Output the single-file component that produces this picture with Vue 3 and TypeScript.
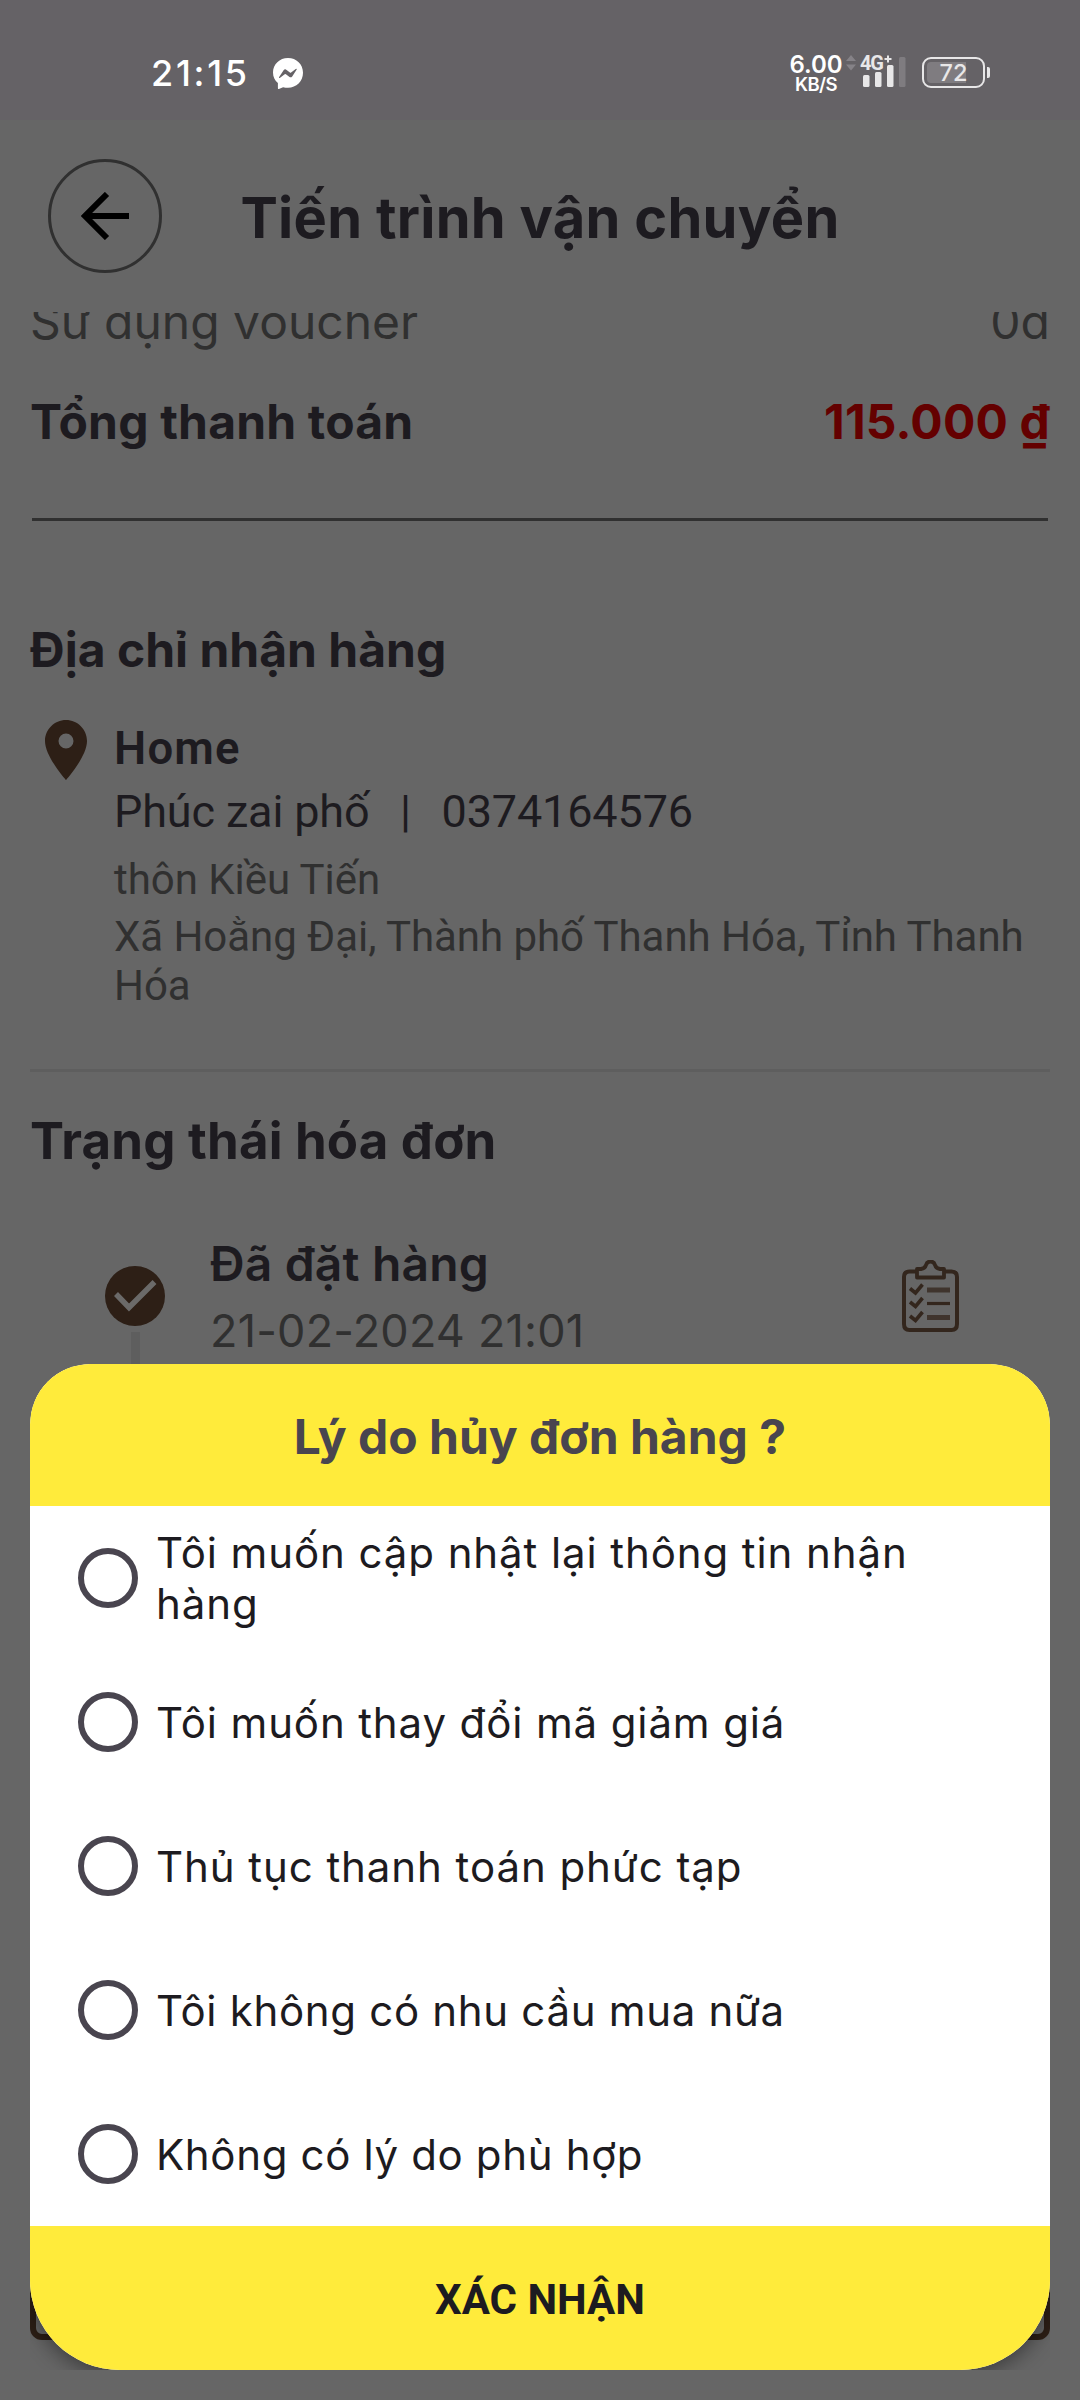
<script setup lang="ts">
import { ref } from 'vue'

interface Reason {
  text: string
  tracking: number
}

const reasons: Reason[] = [
  { text: 'Tôi muốn cập nhật lại thông tin nhận hàng', tracking: 0.9 },
  { text: 'Tôi muốn thay đổi mã giảm giá', tracking: 0.87 },
  { text: 'Thủ tục thanh toán phức tạp', tracking: 0.93 },
  { text: 'Tôi không có nhu cầu mua nữa', tracking: 0.68 },
  { text: 'Không có lý do phù hợp', tracking: 0.65 },
]
const selected = ref<number | null>(null)
</script>

<template>
  <div class="screen">
    <div class="status">
      <span class="clock">21:15</span>
      <svg class="messenger" viewBox="0 0 30 31">
        <path fill="#fff" d="M15 0C6.600 0 0 6.200 0 14.600c0 4.400 1.900 7.900 4.900 10.500V30.300c0 .6.500.9 1 .7l4.200-1.800c1.600.4 3.200.6 4.900.6 8.400 0 15-6.400 15-15S23.400 0 15 0z" />
        <path fill="#656266" d="M6 19.300l4.600-7q1.300-1.700 3-.4l3.300 2.600q.6.400 1.200 0l4.600-3.500q1.300-.8 1 .4l-4.500 7q-1.300 1.700-3 .4l-3.300-2.600q-.6-.4-1.200 0l-4.600 3.500q-1.300.7-1.100-.4z" />
      </svg>
      <div class="net">
        <span class="rate">6.00</span>
        <span class="unit">KB/S</span>
      </div>
      <svg class="updown" viewBox="0 0 10 16" fill="#858287">
        <path d="M5 0l5 6H0zM5 15.500l5-6H0z" />
      </svg>
      <div class="signal">
        <span class="gen">4G</span>
        <svg viewBox="0 0 46 32" width="46" height="32">
          <path d="M24.500 4h7M28 .5v7" fill="none" stroke="#e8e7e8" stroke-width="2" />
          <g fill="#e8e7e8">
            <rect x="3" y="20" width="6.500" height="12" rx="1.500" />
            <rect x="15" y="17" width="6.500" height="15" rx="1.500" />
            <rect x="27" y="10" width="6.500" height="22" rx="1.500" />
          </g>
          <rect x="39" y="2" width="6.500" height="30" rx="1.500" fill="#7f7c80" />
        </svg>
      </div>
      <div class="battery">
        <span class="charge"></span>
        <span class="pct">72</span>
        <span class="nub"></span>
      </div>
    </div>

    <header class="top">
      <button class="back" aria-label="Back">
        <svg viewBox="0 0 48 48" width="48" height="48">
          <path fill="none" stroke="#000" stroke-width="6" d="M48 24H5M26 2L4 24l22 22" />
        </svg>
      </button>
      <h1>Tiến trình vận chuyển</h1>
    </header>

    <main class="content">
      <div class="row voucher"><span>Sử dụng voucher</span><span>0đ</span></div>
      <div class="row total"><span>Tổng thanh toán</span><span class="price">115.000 ₫</span></div>
      <div class="rule"></div>

      <h2 class="addr-title">Địa chỉ nhận hàng</h2>
      <section class="address">
        <svg class="pin" viewBox="0 0 42 60">
          <path fill="#2d1f16" fill-rule="evenodd" d="M21 0C9.400 0 0 9.400 0 21c0 15.750 21 39 21 39s21-23.250 21-39C42 9.400 32.600 0 21 0zm0 28.500a7.500 7.500 0 1 1 0-15 7.500 7.500 0 0 1 0 15z" />
        </svg>
        <div class="lines">
          <p class="place">Home</p>
          <p class="person"><span>Phúc zai phố</span><span class="bar">|</span><span>0374164576</span></p>
          <p class="detail">thôn Kiều Tiến</p>
          <p class="detail region">Xã Hoằng Đại, Thành phố Thanh Hóa, Tỉnh Thanh Hóa</p>
        </div>
      </section>
      <div class="divider"></div>

      <h2 class="state-title">Trạng thái hóa đơn</h2>
      <section class="step">
        <div class="track">
          <svg viewBox="0 0 60 60" width="60" height="60">
            <circle cx="30" cy="30" r="30" fill="#2d1f16" />
            <path fill="none" stroke="#6b6a69" stroke-width="5.500" d="M11 28l13 13.500L49.500 16" />
          </svg>
          <span class="stem"></span>
        </div>
        <div class="step-text">
          <p class="step-name">Đã đặt hàng</p>
          <p class="step-date">21-02-2024 21:01</p>
        </div>
        <svg class="clip" viewBox="0 0 60 72" fill="none" stroke="#33261d">
          <path stroke-width="4" d="M17 11.500H9.500Q4 11.500 4 17v47Q4 70 9.500 70h42Q57 70 57 64V17Q57 11.500 51.500 11.500H44" />
          <path stroke-width="3.800" stroke-linejoin="round" d="M17 17.500V9h4q4-.5 5-4Q27 1.500 30.500 1.500T35 5q1 3.500 5 4h4v8.500z" />
          <path stroke-width="3.600" d="M10 28.500l5.500 4.500 7-8.500M10 42l5.500 4.500 7-8.500M10 56l5.500 4.500 7-8.500" />
          <path stroke="#3f342d" stroke-width="5" d="M27 30h23M27 57.500h23" />
          <path stroke-width="3.200" d="M27 43.500h23" />
        </svg>
      </section>
    </main>
    <div class="bottom-button"></div>

    <div class="dialog-bounds">
      <div class="dialog">
        <div class="dialog-head">Lý do hủy đơn hàng ?</div>
        <label v-for="(reason, i) in reasons" :key="i" class="option" @click="selected = i">
          <span class="radio" :class="{ on: selected === i }"></span>
          <span class="label" :style="{ letterSpacing: reason.tracking + 'px' }">{{ reason.text }}</span>
        </label>
        <button class="confirm">XÁC NHẬN</button>
      </div>
    </div>
  </div>
</template>

<style>
body { margin: 0; background: #666; }
</style>

<style scoped>
.screen { position: relative; width: 1080px; height: 2400px; overflow: hidden; background: #666; color: #1d1b20; font-family: Inter, Roboto, sans-serif; display: flex; flex-direction: column; }
h1, h2, p { margin: 0; }
button { border: 0; padding: 0; background: none; font: inherit; color: inherit; }
span, p, h1, h2 { white-space: nowrap; }

.status { height: 120px; flex: none; box-sizing: border-box; background: #656266; color: #fff; display: flex; padding-left: 151px; align-items: flex-start; }
.clock { width: 122px; margin-top: 51px; font-size: 36px; line-height: 44px; font-weight: 500; letter-spacing: 2.700px; }
.messenger { width: 30px; height: 31px; margin-top: 58px; }
.net { width: 56px; margin: 53px 0 0 485px; display: flex; flex-direction: column; align-items: center; font-weight: 600; }
.rate { font-size: 24px; line-height: 24px; }
.unit { font-size: 18.500px; line-height: 16px; margin-top: -1px; letter-spacing: -0.500px; }
.updown { width: 10px; height: 16px; margin: 55px 4px 0 2px; }
.signal { position: relative; width: 46px; height: 32px; margin-top: 55px; }
.signal svg { display: block; }
.gen { position: absolute; left: 0; top: -3px; font: 700 20px/22px Roboto, sans-serif; color: #e8e7e8; letter-spacing: -1.200px; }
.battery { position: relative; box-sizing: border-box; width: 63px; height: 31px; margin: 57px 0 0 16px; border: 2px solid #e8e7e8; border-radius: 9px; display: flex; align-items: center; justify-content: center; color: #e8e7e8; }
.charge { position: absolute; left: 3px; top: 3px; width: 39px; height: 21px; border-radius: 4px 0 0 4px; background: #7f7c80; }
.pct { position: relative; font-size: 23.500px; line-height: 24px; font-weight: 500; }
.nub { position: absolute; right: -7px; top: 8px; width: 3px; height: 11px; border-radius: 0 2px 2px 0; background: #e8e7e8; }

.top { height: 192px; flex: none; box-sizing: border-box; padding: 0 162px 0 48px; display: flex; align-items: center; }
.back { flex: none; box-sizing: border-box; width: 114px; height: 114px; border: 3px solid #303030; border-radius: 50%; display: flex; align-items: center; justify-content: center; }
.back svg { display: block; }
h1 { flex: 1; text-align: center; font-size: 56px; line-height: 68px; font-weight: 700; padding-top: 3px; letter-spacing: 0.280px; }

.content { flex: none; height: 1400px; overflow: hidden; padding: 0 30px; }
.row { display: flex; justify-content: space-between; font-size: 48px; line-height: 60px; }
.voucher { margin-top: -20px; color: #303030; }
.total { margin-top: 40px; font-weight: 700; letter-spacing: 0.180px; }
.price { color: #640000; }
.rule { height: 3px; margin: 66px 2px 0 2px; background: #303030; }
.addr-title { margin-top: 99px; font-size: 48px; line-height: 60px; font-weight: 700; }
.address { display: flex; margin-top: 34px; padding-left: 15px; }
.pin { flex: none; width: 42px; height: 60px; margin-top: 6px; }
.lines { margin-left: 27px; flex: 1; font-family: Roboto, sans-serif; }
.place { font-size: 45.500px; line-height: 60px; font-weight: 600; margin-top: 5px; letter-spacing: 1.200px; }
.person { font-size: 45px; line-height: 60px; margin-top: 3px; display: flex; letter-spacing: -0.150px; }
.bar { width: 72px; text-align: center; }
.detail { font-size: 42px; line-height: 49px; margin-top: 13px; color: #303030; letter-spacing: -0.050px; }
.region { white-space: normal; margin-top: 8px; }
.divider { height: 3px; margin-top: 59px; background: #5e5e5e; }
.state-title { margin-top: 38px; font-size: 51px; line-height: 62px; font-weight: 700; letter-spacing: 0.180px; }
.step { display: flex; align-items: flex-start; margin-top: 62px; padding-left: 75px; }
.track { display: flex; flex-direction: column; align-items: center; padding-top: 32px; }
.track svg { display: block; }
.stem { width: 9px; height: 180px; margin-top: 6px; background: #5e5e5e; }
.step-text { margin-left: 45px; width: 690px; }
.step-name { font-size: 48px; line-height: 60px; font-weight: 600; letter-spacing: 0.150px; }
.step-date { font-size: 45px; line-height: 60px; color: #303030; margin-top: 7px; letter-spacing: 0.200px; }
.clip { width: 60px; height: 72px; margin-top: 26px; }
.bottom-button { flex: none; box-sizing: border-box; height: 150px; margin: 478px 30px 0; border: 6px solid #2d1f16; border-radius: 12px; }

.dialog-bounds { position: absolute; left: 30px; top: 1364px; width: 1020px; height: 1006px; overflow: hidden; border-radius: 60px 60px 0 0; }
.dialog { height: 100%; border-radius: 60px 60px 90px 90px; overflow: hidden; background: #fff; display: flex; flex-direction: column; box-shadow: 0 4px 22px rgba(0, 0, 0, 0.450); }
.dialog-head { height: 142px; flex: none; background: #ffeb3b; color: #49454f; font-size: 48px; line-height: 146px; font-weight: 700; text-align: center; }
.option { height: 144px; flex: none; box-sizing: border-box; padding: 0 96px 0 48px; display: flex; align-items: center; }
.radio { flex: none; box-sizing: border-box; width: 60px; height: 60px; border: 6px solid #49454f; border-radius: 50%; }
.radio.on { background: radial-gradient(circle, #49454f 14px, transparent 15px); }
.label { white-space: normal; margin-left: 18px; padding-right: 20px; font-size: 42px; line-height: 51px; }
.confirm { flex: 1; background: #ffeb3b; font: 700 42px/50px Roboto, sans-serif; padding-top: 4px; }
</style>
